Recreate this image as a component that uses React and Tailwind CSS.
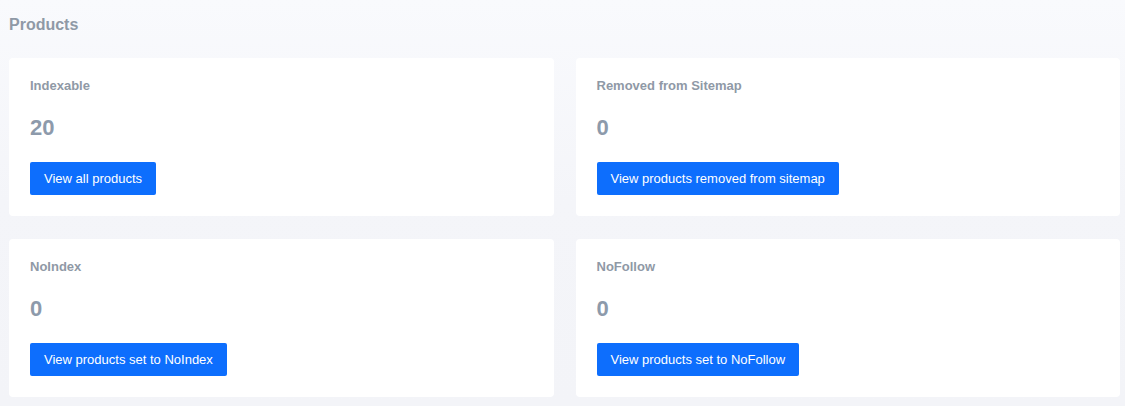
import React from "react";

const cards = [
  { label: "Indexable", value: "20", button: "View all products" },
  { label: "Removed from Sitemap", value: "0", button: "View products removed from sitemap" },
  { label: "NoIndex", value: "0", button: "View products set to NoIndex" },
  { label: "NoFollow", value: "0", button: "View products set to NoFollow" },
];

function Card({ label, value, button }) {
  return (
    <div className="bg-white rounded-[4px] h-[158px] pl-[21px] pt-[20px] flex flex-col items-start">
      <div className="text-[13px] font-bold text-[#8f99a6] leading-[16px]">{label}</div>
      <div className="mt-[22px] text-[22px] font-bold text-[#8d9aab] leading-[24px]">{value}</div>
      <button className="mt-[22px] h-[33px] px-[14px] bg-[#0d6efd] text-white text-[13px] rounded-[2px] leading-none">
        {button}
      </button>
    </div>
  );
}

export default function App() {
  return (
    <div
      className="w-[1125px] h-[406px] overflow-hidden bg-gradient-to-b from-[#f9fafd] via-[#f4f5f9] to-[#f3f4f8]"
      style={{ fontFamily: '"Liberation Sans", Arial, sans-serif' }}
    >
      <div className="pl-[9px] pr-[5px]">
        <h2 className="h-[46px] pt-[16px] text-[16px] font-bold text-[#8f99a6] leading-[18px]">Products</h2>
        <div className="mt-[12px] grid grid-cols-2 gap-x-[22px] gap-y-[23px]">
          {cards.map((c) => (
            <Card key={c.label} {...c} />
          ))}
        </div>
      </div>
    </div>
  );
}
